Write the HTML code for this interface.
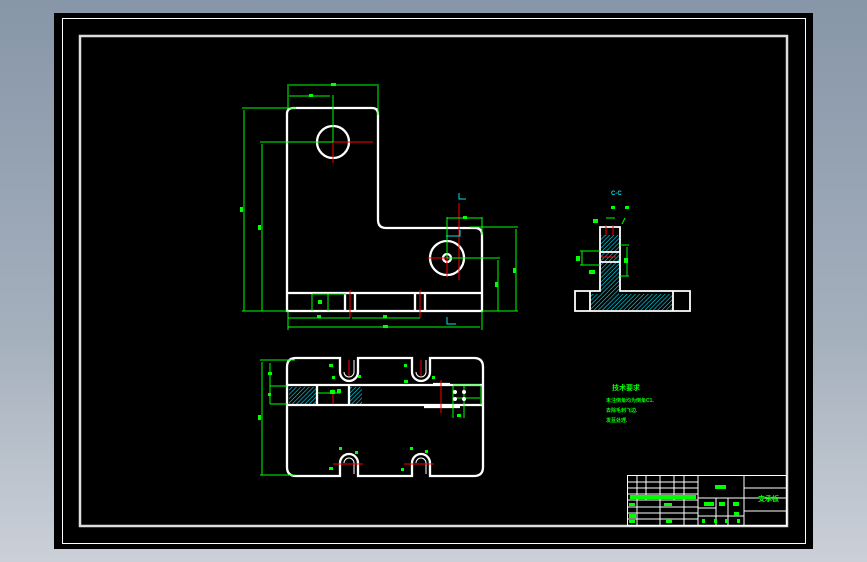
<!DOCTYPE html>
<html><head><meta charset="utf-8"><style>
html,body{margin:0;padding:0;width:867px;height:562px;overflow:hidden;background:linear-gradient(#8796a8,#a5b0bd 60%,#cbd0d8);}
svg{position:absolute;left:0;top:0}
text{font-family:"Liberation Sans","Noto Sans CJK SC",sans-serif;fill:#00ff00;font-weight:bold;}
</style></head><body>
<svg width="867" height="562" viewBox="0 0 867 562">
<defs>
<pattern id="h" width="3" height="3" patternUnits="userSpaceOnUse" patternTransform="rotate(45)">
<line x1="0" y1="0" x2="0" y2="3" stroke="#00e8ff" stroke-width="1.2"/></pattern>
</defs>
<rect x="54" y="13" width="759" height="536" fill="#000"/>
<rect x="62.5" y="18.5" width="743" height="525" fill="none" stroke="#fff" stroke-width="1"/>
<rect x="80" y="36" width="707" height="490" fill="none" stroke="#ddd" stroke-width="2.5"/>

<!-- front view -->
<g fill="none" stroke="#fff" stroke-width="2.3">
<path d="M293 108 H372 Q378 108 378 114 V220 Q378 228 386 228 H475 Q482 228 482 235 V311 H287 V114 Q287 108 293 108 Z"/>
<line x1="287" y1="293" x2="482" y2="293"/>
<line x1="345" y1="293" x2="345" y2="311"/><line x1="355" y1="293" x2="355" y2="311"/>
<line x1="415" y1="293" x2="415" y2="311"/><line x1="425" y1="293" x2="425" y2="311"/>
<circle cx="333" cy="142" r="16"/>
<circle cx="447" cy="258" r="17"/><circle cx="447" cy="258" r="4"/>
</g>
<g stroke="#f00" stroke-width="1">
<line x1="333" y1="142" x2="373" y2="142"/><line x1="333" y1="142" x2="333" y2="163"/>
<line x1="428" y1="258" x2="447" y2="258"/><line x1="447" y1="258" x2="447" y2="277"/>
<line x1="459" y1="203" x2="459" y2="280"/>
<line x1="350" y1="290" x2="350" y2="318"/><line x1="420" y1="290" x2="420" y2="318"/>
</g>
<g stroke="#00ff00" stroke-width="1" fill="none">
<line x1="289" y1="85" x2="377" y2="85"/><line x1="289" y1="96" x2="330" y2="96"/>
<line x1="288" y1="84" x2="288" y2="108"/><line x1="378" y1="84" x2="378" y2="115"/>
<line x1="333" y1="95" x2="333" y2="142"/>
<line x1="242" y1="108" x2="296" y2="108"/><line x1="244" y1="110" x2="244" y2="311"/>
<line x1="260" y1="142" x2="333" y2="142"/><line x1="262" y1="144" x2="262" y2="311"/>
<line x1="242" y1="311" x2="287" y2="311"/>
<line x1="447" y1="218" x2="482" y2="218"/><line x1="447" y1="217" x2="447" y2="258"/><line x1="482" y1="217" x2="482" y2="235"/>
<line x1="470" y1="227" x2="518" y2="227"/><line x1="516" y1="229" x2="516" y2="311"/>
<line x1="447" y1="258" x2="500" y2="258"/><line x1="498" y1="260" x2="498" y2="311"/>
<line x1="482" y1="311" x2="518" y2="311"/>
<line x1="288" y1="318" x2="350" y2="318"/><line x1="352" y1="318" x2="420" y2="318"/>
<line x1="288" y1="327" x2="480" y2="327"/><line x1="288" y1="311" x2="288" y2="330"/><line x1="482" y1="311" x2="482" y2="330"/>
<line x1="312" y1="294" x2="312" y2="311"/><line x1="328" y1="294" x2="328" y2="311"/><line x1="312" y1="294" x2="346" y2="294"/>
</g>
<g fill="#00ff00">
<rect x="331" y="83" width="5" height="3"/><rect x="309" y="94" width="4" height="3"/>
<rect x="240" y="207" width="3" height="5"/><rect x="258" y="225" width="3" height="5"/>
<rect x="463" y="216" width="4" height="3"/><rect x="513" y="268" width="3" height="5"/>
<rect x="495" y="282" width="3" height="5"/><rect x="318" y="300" width="4" height="4"/>
<rect x="317" y="315" width="4" height="3"/><rect x="383" y="315" width="4" height="3"/><rect x="383" y="325" width="5" height="3"/>
</g>
<g stroke="#00e0f0" stroke-width="1" fill="none">
<path d="M459 193 V199 H466"/><path d="M446 236 H460 V230"/><path d="M447 317 V324 H456"/>
</g>

<!-- side view -->
<g>
<rect x="590" y="294" width="83" height="16" fill="url(#h)"/>
<rect x="601" y="235" width="18" height="59" fill="url(#h)"/>
<g fill="none" stroke="#fff" stroke-width="1.8">
<path d="M600 227 V291 H575 V311 H690 V291 H620 V227 Z"/>
<line x1="590" y1="291" x2="590" y2="311"/><line x1="673" y1="291" x2="673" y2="311"/>
<line x1="600" y1="252" x2="620" y2="252"/><line x1="600" y1="262" x2="620" y2="262"/>
</g>
<line x1="601" y1="257" x2="616" y2="257" stroke="#f00"/>
<line x1="606" y1="225" x2="606" y2="236" stroke="#f00"/><line x1="613" y1="225" x2="613" y2="236" stroke="#f00"/>
<g stroke="#00ff00" fill="none">
<line x1="580" y1="251" x2="600" y2="251"/><line x1="580" y1="265" x2="600" y2="265"/><line x1="582" y1="251" x2="582" y2="265"/>
<line x1="620" y1="245" x2="629" y2="245"/><line x1="627" y1="247" x2="627" y2="276"/><line x1="620" y1="276" x2="629" y2="276"/>
<line x1="606" y1="218" x2="615" y2="218"/><line x1="625" y1="218" x2="622" y2="224"/>
</g>
<g fill="#00ff00"><rect x="576" y="256" width="4" height="5"/><rect x="624" y="258" width="4" height="5"/>
<rect x="611" y="206" width="4" height="3"/><rect x="625" y="206" width="4" height="3"/><rect x="593" y="219" width="5" height="4"/><rect x="589" y="270" width="6" height="4"/></g>
<text x="611" y="195" font-size="6" style="fill:#00e0f0">C-C</text>
</g>

<!-- bottom view -->
<rect x="289" y="387" width="28" height="17" fill="url(#h)"/>
<rect x="349" y="387" width="13" height="17" fill="url(#h)"/>
<g fill="none" stroke="#fff" stroke-width="2.3">
<path d="M296 358 H340 V372 A9 9 0 0 0 358 372 V358 H412 V372 A9 9 0 0 0 430 372 V358 H474 Q483 358 483 367 V467 Q483 476 474 476 H430 V463 A9 9 0 0 0 412 463 V476 H358 V463 A9 9 0 0 0 340 463 V476 H296 Q287 476 287 467 V367 Q287 358 296 358 Z"/>
<line x1="288" y1="385" x2="482" y2="385"/><line x1="288" y1="405" x2="482" y2="405"/>
<line x1="317" y1="386" x2="317" y2="404"/><line x1="349" y1="386" x2="349" y2="404"/>
<line x1="433" y1="384" x2="450" y2="384"/><line x1="424" y1="407" x2="460" y2="407"/>
</g>
<g fill="none" stroke="#fff" stroke-width="1"><path d="M344 372 A5 5 0 0 0 354 372 V360"/><path d="M416 372 A5 5 0 0 0 426 372 V360"/>
<path d="M344 463 A5 5 0 0 1 354 463 V474"/><path d="M416 463 A5 5 0 0 1 426 463 V474"/></g>
<g stroke="#f00" stroke-width="1"><line x1="349" y1="360" x2="349" y2="376"/><line x1="421" y1="360" x2="421" y2="376"/>
<line x1="333" y1="464" x2="363" y2="464"/><line x1="404" y1="464" x2="434" y2="464"/>
<line x1="333" y1="389" x2="333" y2="404"/><line x1="441" y1="380" x2="441" y2="413"/></g>
<g stroke="#00ff00" fill="none">
<line x1="260" y1="360" x2="295" y2="360"/><line x1="262" y1="362" x2="262" y2="475"/><line x1="260" y1="475" x2="295" y2="475"/>
<line x1="270" y1="363" x2="270" y2="404"/><line x1="270" y1="386" x2="287" y2="386"/><line x1="270" y1="404" x2="287" y2="404"/>
<line x1="453" y1="385" x2="480" y2="385"/><line x1="453" y1="398" x2="480" y2="398"/><line x1="453" y1="386" x2="453" y2="418"/><line x1="464" y1="386" x2="464" y2="418"/>
<line x1="481" y1="385" x2="481" y2="405"/><line x1="318" y1="393" x2="340" y2="393"/>
</g>
<g fill="#fff"><circle cx="455" cy="392" r="2"/><circle cx="464" cy="392" r="2"/><circle cx="455" cy="399" r="2"/><circle cx="464" cy="399" r="2"/></g>
<g fill="#00ff00"><rect x="268" y="372" width="4" height="3"/><rect x="268" y="393" width="3" height="3"/><rect x="258" y="415" width="3" height="5"/>
<rect x="329" y="364" width="4" height="3"/><rect x="404" y="364" width="3" height="3"/><rect x="329" y="467" width="4" height="3"/><rect x="401" y="468" width="3" height="3"/>
<rect x="330" y="390" width="5" height="4"/><rect x="337" y="389" width="4" height="4"/><rect x="457" y="414" width="4" height="3"/>
<rect x="332" y="376" width="3" height="3"/><rect x="358" y="375" width="3" height="3"/><rect x="404" y="380" width="4" height="3"/><rect x="432" y="376" width="3" height="3"/>
<rect x="339" y="447" width="3" height="3"/><rect x="355" y="451" width="3" height="3"/><rect x="410" y="447" width="3" height="3"/><rect x="425" y="450" width="3" height="3"/></g>

<!-- tech requirements -->
<text x="612" y="390" font-size="7">技术要求</text>
<text x="606" y="402" font-size="5">未注倒角均为倒角C1.</text>
<text x="606" y="412" font-size="5">去除毛刺飞边.</text>
<text x="606" y="422" font-size="5">发蓝处理.</text>

<!-- title block -->
<g stroke="#fff" stroke-width="1" fill="none">
<rect x="627.5" y="475.5" width="159" height="50"/>
<line x1="698" y1="476" x2="698" y2="525"/><line x1="744" y1="476" x2="744" y2="525"/>
<line x1="698" y1="498" x2="787" y2="498"/><line x1="744" y1="488" x2="787" y2="488"/><line x1="744" y1="511" x2="787" y2="511"/>
<line x1="698" y1="516" x2="744" y2="516"/><line x1="698" y1="508" x2="716" y2="508"/>
<line x1="716" y1="498" x2="716" y2="525"/><line x1="728" y1="498" x2="728" y2="525"/>
<line x1="628" y1="482" x2="698" y2="482"/><line x1="628" y1="488" x2="698" y2="488"/><line x1="628" y1="494" x2="698" y2="494"/>
<line x1="628" y1="500" x2="698" y2="500"/><line x1="628" y1="507" x2="698" y2="507"/><line x1="628" y1="513" x2="698" y2="513"/><line x1="628" y1="519" x2="698" y2="519"/>
<line x1="637" y1="476" x2="637" y2="525"/><line x1="646" y1="476" x2="646" y2="500"/><line x1="660" y1="476" x2="660" y2="525"/>
<line x1="674" y1="476" x2="674" y2="500"/><line x1="684" y1="476" x2="684" y2="525"/>
</g>
<g fill="#00ff00"><rect x="630" y="495" width="66" height="4"/><rect x="629" y="503" width="6" height="3"/><rect x="664" y="503" width="8" height="3"/>
<rect x="629" y="514" width="7" height="4"/><rect x="629" y="520" width="6" height="3"/><rect x="666" y="519" width="6" height="4"/>
<rect x="715" y="485" width="11" height="4"/><rect x="704" y="502" width="10" height="4"/><rect x="719" y="502" width="6" height="4"/><rect x="733" y="502" width="6" height="4"/><rect x="734" y="512" width="5" height="4"/>
<rect x="702" y="519" width="3" height="4"/><rect x="714" y="519" width="3" height="4"/><rect x="725" y="519" width="3" height="4"/><rect x="737" y="519" width="3" height="4"/></g>
<text x="758" y="501" font-size="7">支承板</text>
</svg>
</body></html>
